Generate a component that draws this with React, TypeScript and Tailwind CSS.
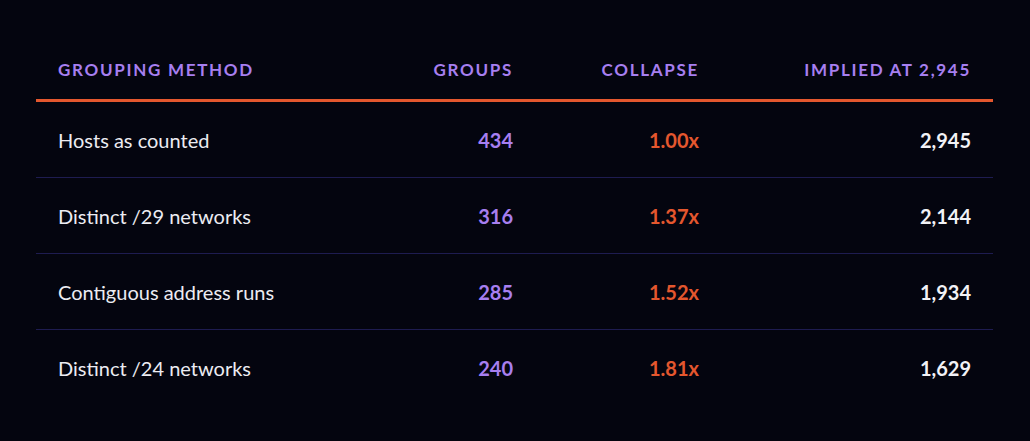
import React from "react";

const rows = [
  { name: "Hosts as counted", groups: "434", collapse: "1.00x", implied: "2,945" },
  { name: "Distinct /29 networks", groups: "316", collapse: "1.37x", implied: "2,144" },
  { name: "Contiguous address runs", groups: "285", collapse: "1.52x", implied: "1,934" },
  { name: "Distinct /24 networks", groups: "240", collapse: "1.81x", implied: "1,629" },
];

const font = { fontFamily: "Lato, 'Noto Sans', sans-serif" };

export default function App() {
  return (
    <div className="w-[1030px] h-[441px] bg-[#04050f] pt-[41px] px-[36px]" style={font}>
      <div className="w-[957px]">
        <div className="grid grid-cols-[330px_169px_186px_272px] h-[61px] items-center border-b-[3px] border-[#e4572e] text-[17px] font-bold tracking-[0.1em] text-[#a77ff0] uppercase">
          <div className="px-[22px]">Grouping Method</div>
          <div className="px-[22px] text-right">Groups</div>
          <div className="px-[22px] text-right">Collapse</div>
          <div className="px-[22px] text-right">Implied at 2,945</div>
        </div>
        {rows.map((r, i) => (
          <div
            key={r.name}
            className={`grid grid-cols-[330px_169px_186px_272px] h-[76px] items-center ${
              i < rows.length - 1 ? "border-b border-[#1e1c50]" : ""
            }`}
          >
            <div className="px-[22px] text-[20px] text-[#ececf2]">{r.name}</div>
            <div className="px-[22px] text-right text-[20px] font-bold text-[#a77ff0]">{r.groups}</div>
            <div className="px-[22px] text-right text-[20px] font-bold text-[#e4572e]">{r.collapse}</div>
            <div className="px-[22px] text-right text-[20px] font-bold text-[#f2f2f6]">{r.implied}</div>
          </div>
        ))}
      </div>
    </div>
  );
}
